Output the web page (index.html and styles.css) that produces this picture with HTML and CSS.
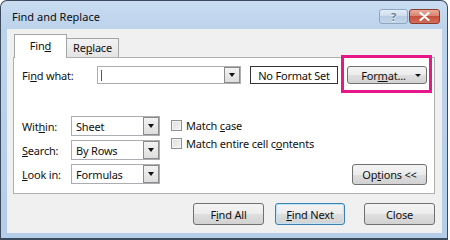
FILE: index.html
```html
<!DOCTYPE html>
<html>
<head>
<meta charset="utf-8">
<link rel="stylesheet" href="styles.css">
</head>
<body>
<div class="window">
  <div class="titlebar">
    <span class="title">Find and Replace</span>
    <div class="caps">
      <span class="cap help">?</span>
      <span class="cap close">
        <svg width="11" height="9" viewBox="0 0 11 9"><path d="M1.5 1 L9.5 8 M9.5 1 L1.5 8" stroke="#fff" stroke-width="2.2" stroke-linecap="round"/></svg>
      </span>
    </div>
  </div>
  <div class="client">
    <div class="tabs">
      <div class="tab active"><span>Fin<u>d</u></span></div>
      <div class="tab"><span>Re<u>p</u>lace</span></div>
    </div>
    <div class="panel">
      <div class="find-row">
        <span class="find-label">Fi<u>n</u>d what:</span>
        <div class="combo wide"><span class="caret"></span><span class="drop"><i class="arrow"></i></span></div>
        <div class="noformat"><span>No Format Set</span></div>
        <div class="hl-wrap">
          <div class="btn format"><span class="btn-text">For<u>m</u>at...</span><i class="arrow small"></i></div>
        </div>
      </div>
      <div class="opts">
        <div class="selects">
          <span class="sel-label">Wit<u>h</u>in:</span>
          <div class="combo narrow"><span class="val">Sheet</span><span class="drop"><i class="arrow"></i></span></div>
          <span class="sel-label"><u>S</u>earch:</span>
          <div class="combo narrow"><span class="val">By Rows</span><span class="drop"><i class="arrow"></i></span></div>
          <span class="sel-label"><u>L</u>ook in:</span>
          <div class="combo narrow"><span class="val">Formulas</span><span class="drop"><i class="arrow"></i></span></div>
        </div>
        <div class="checks">
          <label class="check"><span class="box"></span><span>Match <u>c</u>ase</span></label>
          <label class="check"><span class="box"></span><span>Match entire cell c<u>o</u>ntents</span></label>
        </div>
        <div class="btn options"><span>Op<u>t</u>ions &lt;&lt;</span></div>
      </div>
    </div>
    <div class="actions">
      <div class="btn act findall"><span>F<u>i</u>nd All</span></div>
      <div class="btn act findnext"><span><u>F</u>ind Next</span></div>
      <div class="btn act closebtn"><span>Close</span></div>
    </div>
  </div>
</div>
</body>
</html>
```
FILE: styles.css
```css
body {
  margin: 0;
  background: #ffffff;
  font-family: "Noto Sans", "Open Sans", sans-serif;
  font-size: 11px;
  color: #111;
}

.window {
  width: 448px;
  height: 240px;
  box-sizing: border-box;
  border: 1px solid #3b4a5c;
  border-bottom-width: 2px;
  border-radius: 7px 7px 0 0;
  background: linear-gradient(#c9dcf1, #bcd3ec 28px, #b4cde9);
  display: flex;
  flex-direction: column;
  padding: 0 5px 5px 6px;
}

.titlebar {
  height: 28px;
  display: flex;
  flex-shrink: 0;
}

.title {
  padding: 8px 0 0 5px;
  line-height: 16px;
  font-size: 11px;
  color: #0b0b0b;
}

.caps {
  margin-left: auto;
  margin-top: 8px;
  margin-right: 2px;
  display: flex;
  gap: 1px;
}

.cap {
  height: 15px;
  box-sizing: border-box;
  border-radius: 3px;
  display: flex;
  align-items: center;
  justify-content: center;
}

.help {
  width: 29px;
  border: 1px solid #8ea6c2;
  background: linear-gradient(#e3edf7, #cbdbec 50%, #b7cce3 50%, #c4d6ea);
  color: #6d7f95;
  font-weight: bold;
  font-size: 11px;
  text-shadow: 0 1px 0 #fff;
}

.close {
  width: 31px;
  border: 1px solid #8c3a2c;
  background: linear-gradient(#e8aa9c, #d7806e 50%, #c5503c 50%, #d36e59);
}

.client {
  flex: 1;
  background: #f0f0f0;
  padding: 5px 7px 7px 6px;
  display: flex;
  flex-direction: column;
  letter-spacing: -0.2px;
}

.tabs {
  display: flex;
  align-items: flex-end;
  height: 23px;
  margin-left: 1px;
}

.tab {
  box-sizing: border-box;
  height: 19px;
  width: 52px;
  border: 1px solid #a5a5a5;
  border-bottom: none;
  border-left: none;
  background: linear-gradient(#f3f3f3, #e4e4e4);
  display: flex;
  align-items: center;
  justify-content: center;
  line-height: 14px;
}

.tab.active {
  height: 24px;
  width: 53px;
  border-left: 1px solid #a5a5a5;
  background: #fff;
  margin-bottom: -1px;
  position: relative;
  z-index: 1;
  padding-bottom: 2px;
}

.panel {
  box-sizing: border-box;
  height: 137px;
  border: 1px solid #b0b0b0;
  background: #fff;
  padding: 8px 7px 8px 8px;
  display: flex;
  flex-direction: column;
}

.find-row {
  display: flex;
  align-items: center;
  height: 18px;
}

.find-label {
  width: 75px;
}

.combo {
  box-sizing: border-box;
  border: 1px solid #abadb3;
  background: #fff;
  display: flex;
  align-items: center;
  position: relative;
}

.combo.wide {
  width: 144px;
  height: 18px;
}

.combo.narrow {
  width: 89px;
  height: 20px;
}

.caret {
  width: 1px;
  height: 11px;
  background: #555;
  margin-left: 3px;
}

.val {
  padding-left: 4px;
}

.drop {
  margin-left: auto;
  width: 16px;
  align-self: stretch;
  box-sizing: border-box;
  border: 1px solid #8a8a8a;
  background: linear-gradient(#f2f2f2, #dedede);
  display: flex;
  align-items: center;
  justify-content: center;
}

.arrow {
  width: 0;
  height: 0;
  border-left: 3.5px solid transparent;
  border-right: 3.5px solid transparent;
  border-top: 4px solid #111;
}

.arrow.small {
  border-left-width: 3px;
  border-right-width: 3px;
  border-top-width: 3px;
  margin-right: 5px;
}

.noformat {
  box-sizing: border-box;
  width: 88px;
  height: 18px;
  margin-left: 9px;
  border: 1px solid #333;
  background: #fff;
  display: flex;
  align-items: center;
  justify-content: center;
}

.hl-wrap {
  position: relative;
  margin-left: 9px;
}

.hl-wrap::after {
  content: "";
  position: absolute;
  top: -11px;
  bottom: -9px;
  left: -6px;
  right: -5px;
  border: 3px solid #e8168b;
}

.btn {
  box-sizing: border-box;
  border: 1px solid #707070;
  border-radius: 3px;
  background: linear-gradient(#f4f4f4, #ececec 50%, #dfdfdf 50%, #d2d2d2);
  display: flex;
  align-items: center;
  justify-content: center;
}

.btn.format {
  width: 80px;
  height: 18px;
}

.btn-text {
  flex: 1;
  text-align: center;
  padding-left: 4px;
}

.opts {
  margin-top: 32px;
  display: flex;
  align-items: flex-start;
}

.selects {
  display: grid;
  grid-template-columns: 49px 89px;
  row-gap: 4px;
  align-items: center;
}

.checks {
  margin-left: 11px;
  padding-top: 4px;
  display: flex;
  flex-direction: column;
  gap: 7px;
}

.check {
  display: flex;
  align-items: center;
  height: 11px;
  line-height: 11px;
}

.box {
  width: 11px;
  height: 11px;
  box-sizing: border-box;
  border: 1px solid #8e8f8f;
  background: linear-gradient(135deg, #dcdcdc, #f4f4f4);
  box-shadow: inset 0 0 0 1px #f4f4f4;
  margin-right: 4px;
}

.btn.options {
  margin-left: auto;
  align-self: flex-end;
  width: 75px;
  height: 21px;
  margin-bottom: -1px;
}

.actions {
  margin-top: 9px;
  display: flex;
  justify-content: flex-end;
}

.btn.act {
  height: 22px;
  width: 71px;
}

.btn.findall {
  margin-right: 11px;
}

.btn.findnext {
  width: 70px;
  margin-right: 19px;
  border-color: #3c7fb1;
  box-shadow: inset 0 0 0 1px #bfe4f7;
}
```
